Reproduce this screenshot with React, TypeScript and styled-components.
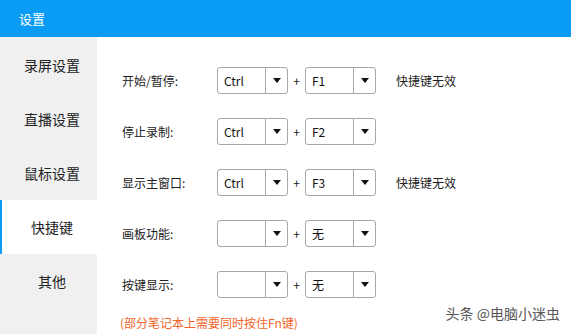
import React from "react";
import styled, { createGlobalStyle } from "styled-components";

const Global = createGlobalStyle`
  html, body { margin: 0; padding: 0; background: #fff; }
  body { font-family: "Noto Sans CJK SC", "Noto Sans", sans-serif; }
  * { box-sizing: border-box; }
`;

const Page = styled.div`
  position: relative;
  width: 571px;
  height: 334px;
  overflow: hidden;
  display: flex;
  flex-direction: column;
`;

const Header = styled.div`
  height: 37px;
  background: #0a9bf5;
  color: #fff;
  font-size: 13px;
  line-height: 37px;
  padding-left: 19px;
  flex-shrink: 0;
`;

const Body = styled.div`
  flex: 1;
  display: flex;
`;

const Sidebar = styled.div`
  width: 97px;
  background: #f0f0f0;
  display: flex;
  flex-direction: column;
  padding-top: 1px;
`;

const NavItem = styled.div<{ $active?: boolean }>`
  height: 54px;
  display: flex;
  align-items: center;
  justify-content: center;
  font-size: 14px;
  color: #222;
  background: ${(p) => (p.$active ? "#fff" : "transparent")};
  border-left: 2px solid ${(p) => (p.$active ? "#0a9bf5" : "transparent")};
  padding-left: 5px;
`;

const Content = styled.div`
  flex: 1;
  padding: 30px 0 0 25px;
  display: flex;
  flex-direction: column;
  gap: 24px;
`;

const Row = styled.div`
  display: flex;
  align-items: center;
  height: 27px;
`;

const Label = styled.div`
  width: 95px;
  font-size: 12px;
  color: #222;
`;

const Select = styled.div`
  width: 71px;
  height: 27px;
  border: 1px solid #a8a8a8;
  border-radius: 3px;
  background: #fff;
  display: flex;
`;

const SelectValue = styled.div`
  flex: 1;
  padding-left: 6px;
  font-size: 12px;
  line-height: 25px;
  color: #111;
  border-right: 1px solid #a8a8a8;
`;

const Arrow = styled.div`
  width: 21px;
  display: flex;
  align-items: center;
  justify-content: center;
  &::after {
    content: "";
    border-left: 4.5px solid transparent;
    border-right: 4.5px solid transparent;
    border-top: 5px solid #111;
  }
`;

const Plus = styled.div`
  width: 17px;
  text-align: center;
  font-size: 12px;
  color: #222;
`;

const Note = styled.div`
  margin-left: 20px;
  font-size: 12px;
  color: #222;
`;

const Hint = styled.div`
  margin: -8px 0 0 -2px;
  font-size: 12px;
  color: #f0652a;
`;

const Watermark = styled.div`
  position: absolute;
  right: 11px;
  bottom: 11px;
  font-size: 14px;
  color: #555;
  text-shadow: 0 0 2px #fff, 0 0 2px #fff;
`;

type Shortcut = { label: string; a: string; b: string; note?: string };

const rows: Shortcut[] = [
  { label: "开始/暂停:", a: "Ctrl", b: "F1", note: "快捷键无效" },
  { label: "停止录制:", a: "Ctrl", b: "F2" },
  { label: "显示主窗口:", a: "Ctrl", b: "F3", note: "快捷键无效" },
  { label: "画板功能:", a: "", b: "无" },
  { label: "按键显示:", a: "", b: "无" },
];

const nav = ["录屏设置", "直播设置", "鼠标设置", "快捷键", "其他"];

const Dropdown = ({ value }: { value: string }) => (
  <Select>
    <SelectValue>{value}</SelectValue>
    <Arrow />
  </Select>
);

export default function App() {
  return (
    <Page>
      <Global />
      <Header>设置</Header>
      <Body>
        <Sidebar>
          {nav.map((n) => (
            <NavItem key={n} $active={n === "快捷键"}>
              {n}
            </NavItem>
          ))}
        </Sidebar>
        <Content>
          {rows.map((r) => (
            <Row key={r.label}>
              <Label>{r.label}</Label>
              <Dropdown value={r.a} />
              <Plus>+</Plus>
              <Dropdown value={r.b} />
              {r.note && <Note>{r.note}</Note>}
            </Row>
          ))}
          <Hint>(部分笔记本上需要同时按住Fn键)</Hint>
        </Content>
      </Body>
      <Watermark>头条 @电脑小迷虫</Watermark>
    </Page>
  );
}
